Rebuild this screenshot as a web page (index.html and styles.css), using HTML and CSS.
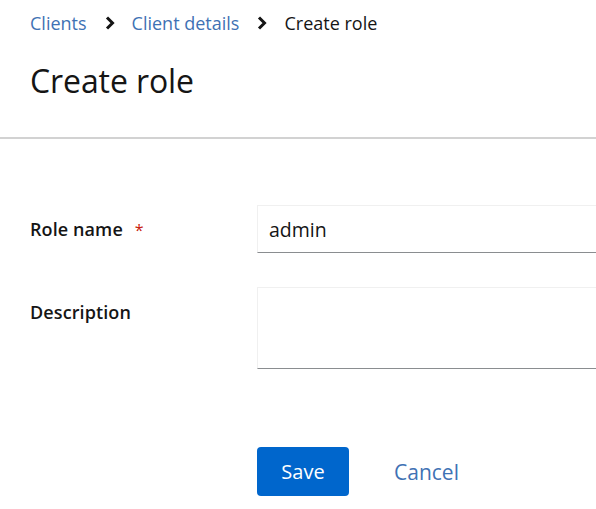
FILE: index.html
```html
<!DOCTYPE html>
<html>
<head>
<meta charset="utf-8">
<link rel="stylesheet" href="styles.css">
</head>
<body>
<section class="page-header">
  <nav class="breadcrumb">
    <a class="crumb-link">Clients</a>
    <svg class="chev" viewBox="0 0 10 14" width="10" height="14"><path d="M2 1.5 L7.5 7 L2 12.5" fill="none" stroke="#151515" stroke-width="3"/></svg>
    <a class="crumb-link">Client details</a>
    <svg class="chev" viewBox="0 0 10 14" width="10" height="14"><path d="M2 1.5 L7.5 7 L2 12.5" fill="none" stroke="#151515" stroke-width="3"/></svg>
    <span class="crumb-current">Create role</span>
  </nav>
  <h1 class="title">Create role</h1>
</section>
<section class="form">
  <div class="row">
    <label class="label">Role name <span class="req">*</span></label>
    <div class="input">admin</div>
  </div>
  <div class="row row-top">
    <label class="label label-desc">Description</label>
    <div class="textarea"></div>
  </div>
  <div class="actions">
    <button class="btn-primary">Save</button>
    <a class="btn-link">Cancel</a>
  </div>
</section>
</body>
</html>
```
FILE: styles.css
```css
* { box-sizing: border-box; }
html, body { margin: 0; background: #fff; }
body {
  font-family: "Open Sans", "Liberation Sans", sans-serif;
  color: #151515;
  width: 596px;
  overflow: hidden;
}
.page-header {
  padding: 9px 0 0 30px;
  border-bottom: 2px solid #d2d2d2;
  height: 139px;
}
.breadcrumb {
  display: flex;
  align-items: center;
  height: 28px;
  font-size: 18px;
}
.crumb-link { color: #3f72b4; }
.crumb-current { color: #151515; }
.chev { margin: 0 17px 0 18px; }
.title {
  margin: 23px 0 0 0;
  font-size: 32px;
  font-weight: 400;
  line-height: 42px;
  font-family: "Open Sans", sans-serif;
  letter-spacing: -0.1px;
}
.form {
  padding: 66px 0 0 30px;
}
.row {
  display: flex;
  align-items: center;
  margin-bottom: 34px;
}
.row-top { align-items: flex-start; }
.label {
  width: 227px;
  font-size: 18px;
  font-weight: 600;
  letter-spacing: 0.1px;
}
.label-desc { padding-top: 13px; }
.req { color: #c9190b; margin-left: 7px; font-weight: 400; font-size: 16px; }
.input {
  flex: 1;
  height: 48px;
  border: 1px solid #f0f0f0;
  border-bottom: 1px solid #8a8d90;
  border-right: none;
  padding: 0 11px;
  display: flex;
  align-items: center;
  font-size: 19.5px;
  color: #151515;
}
.textarea {
  flex: 1;
  height: 82px;
  border: 1px solid #f0f0f0;
  border-bottom: 1px solid #8a8d90;
  border-right: none;
}
.actions {
  display: flex;
  align-items: center;
  margin-top: 78px;
  padding-left: 227px;
}
.btn-primary {
  width: 92px;
  height: 49px;
  background: #0066cc;
  color: #fff;
  border: none;
  border-radius: 4px;
  font-family: "Open Sans", sans-serif;
  font-size: 20px;
}
.btn-link {
  margin-left: 45px;
  color: #3f72b4;
  font-size: 21px;
}
```
